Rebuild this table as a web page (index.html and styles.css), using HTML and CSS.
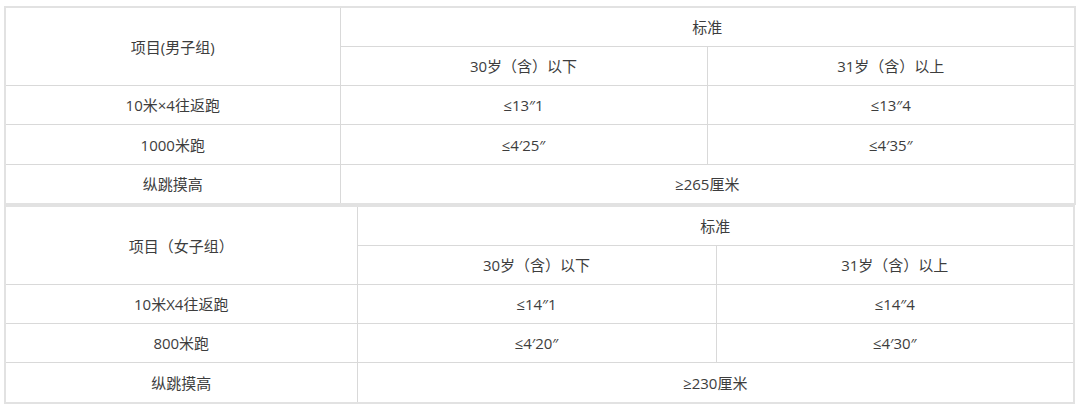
FILE: index.html
```html
<!DOCTYPE html>
<html lang="zh-CN">
<head>
<meta charset="utf-8">
<title>体能测评标准</title>
<link rel="stylesheet" href="styles.css">
</head>
<body>
<table class="std std-men">
  <colgroup><col class="c1"><col class="c2"><col class="c3"></colgroup>
  <tr class="r1"><td rowspan="2">项目(男子组)</td><td colspan="2">标准</td></tr>
  <tr><td>30岁（含）以下</td><td>31岁（含）以上</td></tr>
  <tr><td>10米×4往返跑</td><td>≤13″1</td><td>≤13″4</td></tr>
  <tr class="tall"><td>1000米跑</td><td>≤4′25″</td><td>≤4′35″</td></tr>
  <tr><td>纵跳摸高</td><td colspan="2">≥265厘米</td></tr>
</table>
<table class="std std-women">
  <colgroup><col class="c1"><col class="c2"><col class="c3"></colgroup>
  <tr class="r1"><td rowspan="2">项目（女子组）</td><td colspan="2">标准</td></tr>
  <tr><td>30岁（含）以下</td><td>31岁（含）以上</td></tr>
  <tr><td>10米X4往返跑</td><td>≤14″1</td><td>≤14″4</td></tr>
  <tr><td>800米跑</td><td>≤4′20″</td><td>≤4′30″</td></tr>
  <tr class="tall"><td>纵跳摸高</td><td colspan="2">≥230厘米</td></tr>
</table>
</body>
</html>
```
FILE: styles.css
```css
html, body {
  margin: 0;
  padding: 0;
  background: #ffffff;
}
body {
  padding: 6px 0 0 4px;
  font-family: "Open Sans", "Noto Sans CJK SC", sans-serif;
  font-size: 15px;
  color: #3d3d3d;
}
.std {
  border-collapse: collapse;
  table-layout: fixed;
  border: 2px solid #e2e2e2;
}
.std td {
  border: 1px solid #d9d9d9;
  height: 38px;
  padding: 0;
  text-align: center;
  vertical-align: middle;
  line-height: 16px;
}
.std .tall td {
  height: 39px;
}
.std-men { width: 1071px; }
.std-men .c1 { width: 335px; }
.std-men .c2 { width: 367px; }
.std-men .c3 { width: 368px; }
.std-women { width: 1070px; }
.std-women .c1 { width: 352px; }
.std-women .c2 { width: 359px; }
.std-women .c3 { width: 358px; }
```
